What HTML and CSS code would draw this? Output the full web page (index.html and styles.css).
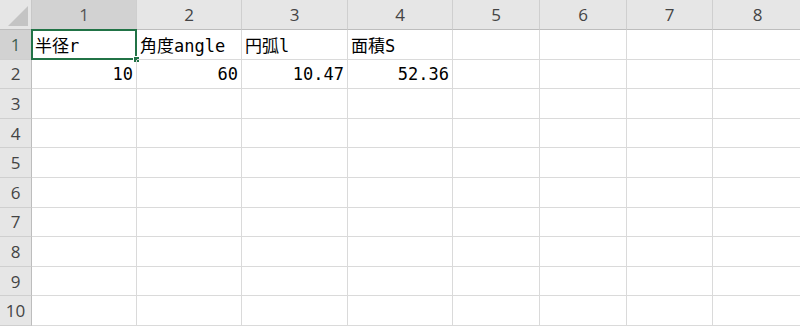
FILE: index.html
```html
<!DOCTYPE html>
<html lang="ja">
<head>
    <meta charset="UTF-8">
    <title>Sheet1</title>
    <link rel="stylesheet" href="styles.css">
</head>
<body>
    <div class="sheet">
        <div class="corner"><span class="corner-tri"></span></div>
        <div class="col-head active">1</div>
        <div class="col-head">2</div>
        <div class="col-head">3</div>
        <div class="col-head">4</div>
        <div class="col-head">5</div>
        <div class="col-head">6</div>
        <div class="col-head">7</div>
        <div class="col-head">8</div>

        <div class="row-head active">1</div>
        <div class="cell selected">半径r<span class="sel-box"><span class="handle"></span></span></div>
        <div class="cell">角度angle</div>
        <div class="cell">円弧l</div>
        <div class="cell">面積S</div>
        <div class="cell"></div>
        <div class="cell"></div>
        <div class="cell"></div>
        <div class="cell"></div>

        <div class="row-head">2</div>
        <div class="cell num">10</div>
        <div class="cell num">60</div>
        <div class="cell num">10.47</div>
        <div class="cell num">52.36</div>
        <div class="cell"></div>
        <div class="cell"></div>
        <div class="cell"></div>
        <div class="cell"></div>
    </div>

    <script>
        // empty rows 3..10
        const sheet = document.querySelector('.sheet');
        for (let r = 3; r <= 10; r++) {
            const head = document.createElement('div');
            head.className = 'row-head';
            head.textContent = r;
            sheet.appendChild(head);
            for (let c = 1; c <= 8; c++) {
                const cell = document.createElement('div');
                cell.className = 'cell';
                sheet.appendChild(cell);
            }
        }
    </script>
</body>
</html>
```

FILE: styles.css
```css
body {
    margin: 0;
    background-color: white;
    overflow: hidden;
}

.sheet {
    display: grid;
    grid-template-columns: 32px 105px 105px 106px 105px 87px 87px 86px 90px;
    grid-template-rows: 30px repeat(10, 29.6px);
    font-family: "DejaVu Sans Mono", "Noto Sans CJK JP", monospace;
}

.corner {
    position: relative;
    background-color: #e6e6e6;
    border-right: 1px solid #c8c8c8;
    border-bottom: 1px solid #bdbdbd;
}

.corner-tri {
    position: absolute;
    right: 3px;
    bottom: 3px;
    width: 0;
    height: 0;
    border-left: 20px solid transparent;
    border-bottom: 20px solid #c4c4c4;
}

.col-head {
    background-color: #e6e6e6;
    color: #444;
    font-family: "Open Sans", "Noto Sans", sans-serif;
    font-size: 17px;
    display: flex;
    align-items: center;
    justify-content: center;
    border-right: 1px solid #cfcfcf;
    border-bottom: 1px solid #bdbdbd;
}

.col-head.active {
    background-color: #d2d2d2;
    color: #555;
    border-bottom: 1px solid #9f9f9f;
}

.row-head {
    background-color: #e6e6e6;
    color: #444;
    font-family: "Open Sans", "Noto Sans", sans-serif;
    font-size: 17px;
    display: flex;
    align-items: center;
    justify-content: center;
    border-right: 1px solid #bdbdbd;
    border-bottom: 1px solid #cfcfcf;
}

.row-head.active {
    background-color: #d2d2d2;
    color: #3f6150;
}

.cell {
    position: relative;
    font-size: 17px;
    color: #000;
    padding: 0 3px;
    display: flex;
    align-items: center;
    white-space: nowrap;
    border-right: 1px solid #dadada;
    border-bottom: 1px solid #dadada;
}

.cell.num {
    justify-content: flex-end;
}

.sel-box {
    position: absolute;
    top: -1px;
    left: -1px;
    right: -1px;
    bottom: -1px;
    border: 2px solid #217346;
}

.handle {
    position: absolute;
    right: -5px;
    bottom: -5px;
    width: 5px;
    height: 5px;
    background-color: #217346;
    border: 1px solid white;
}
```
